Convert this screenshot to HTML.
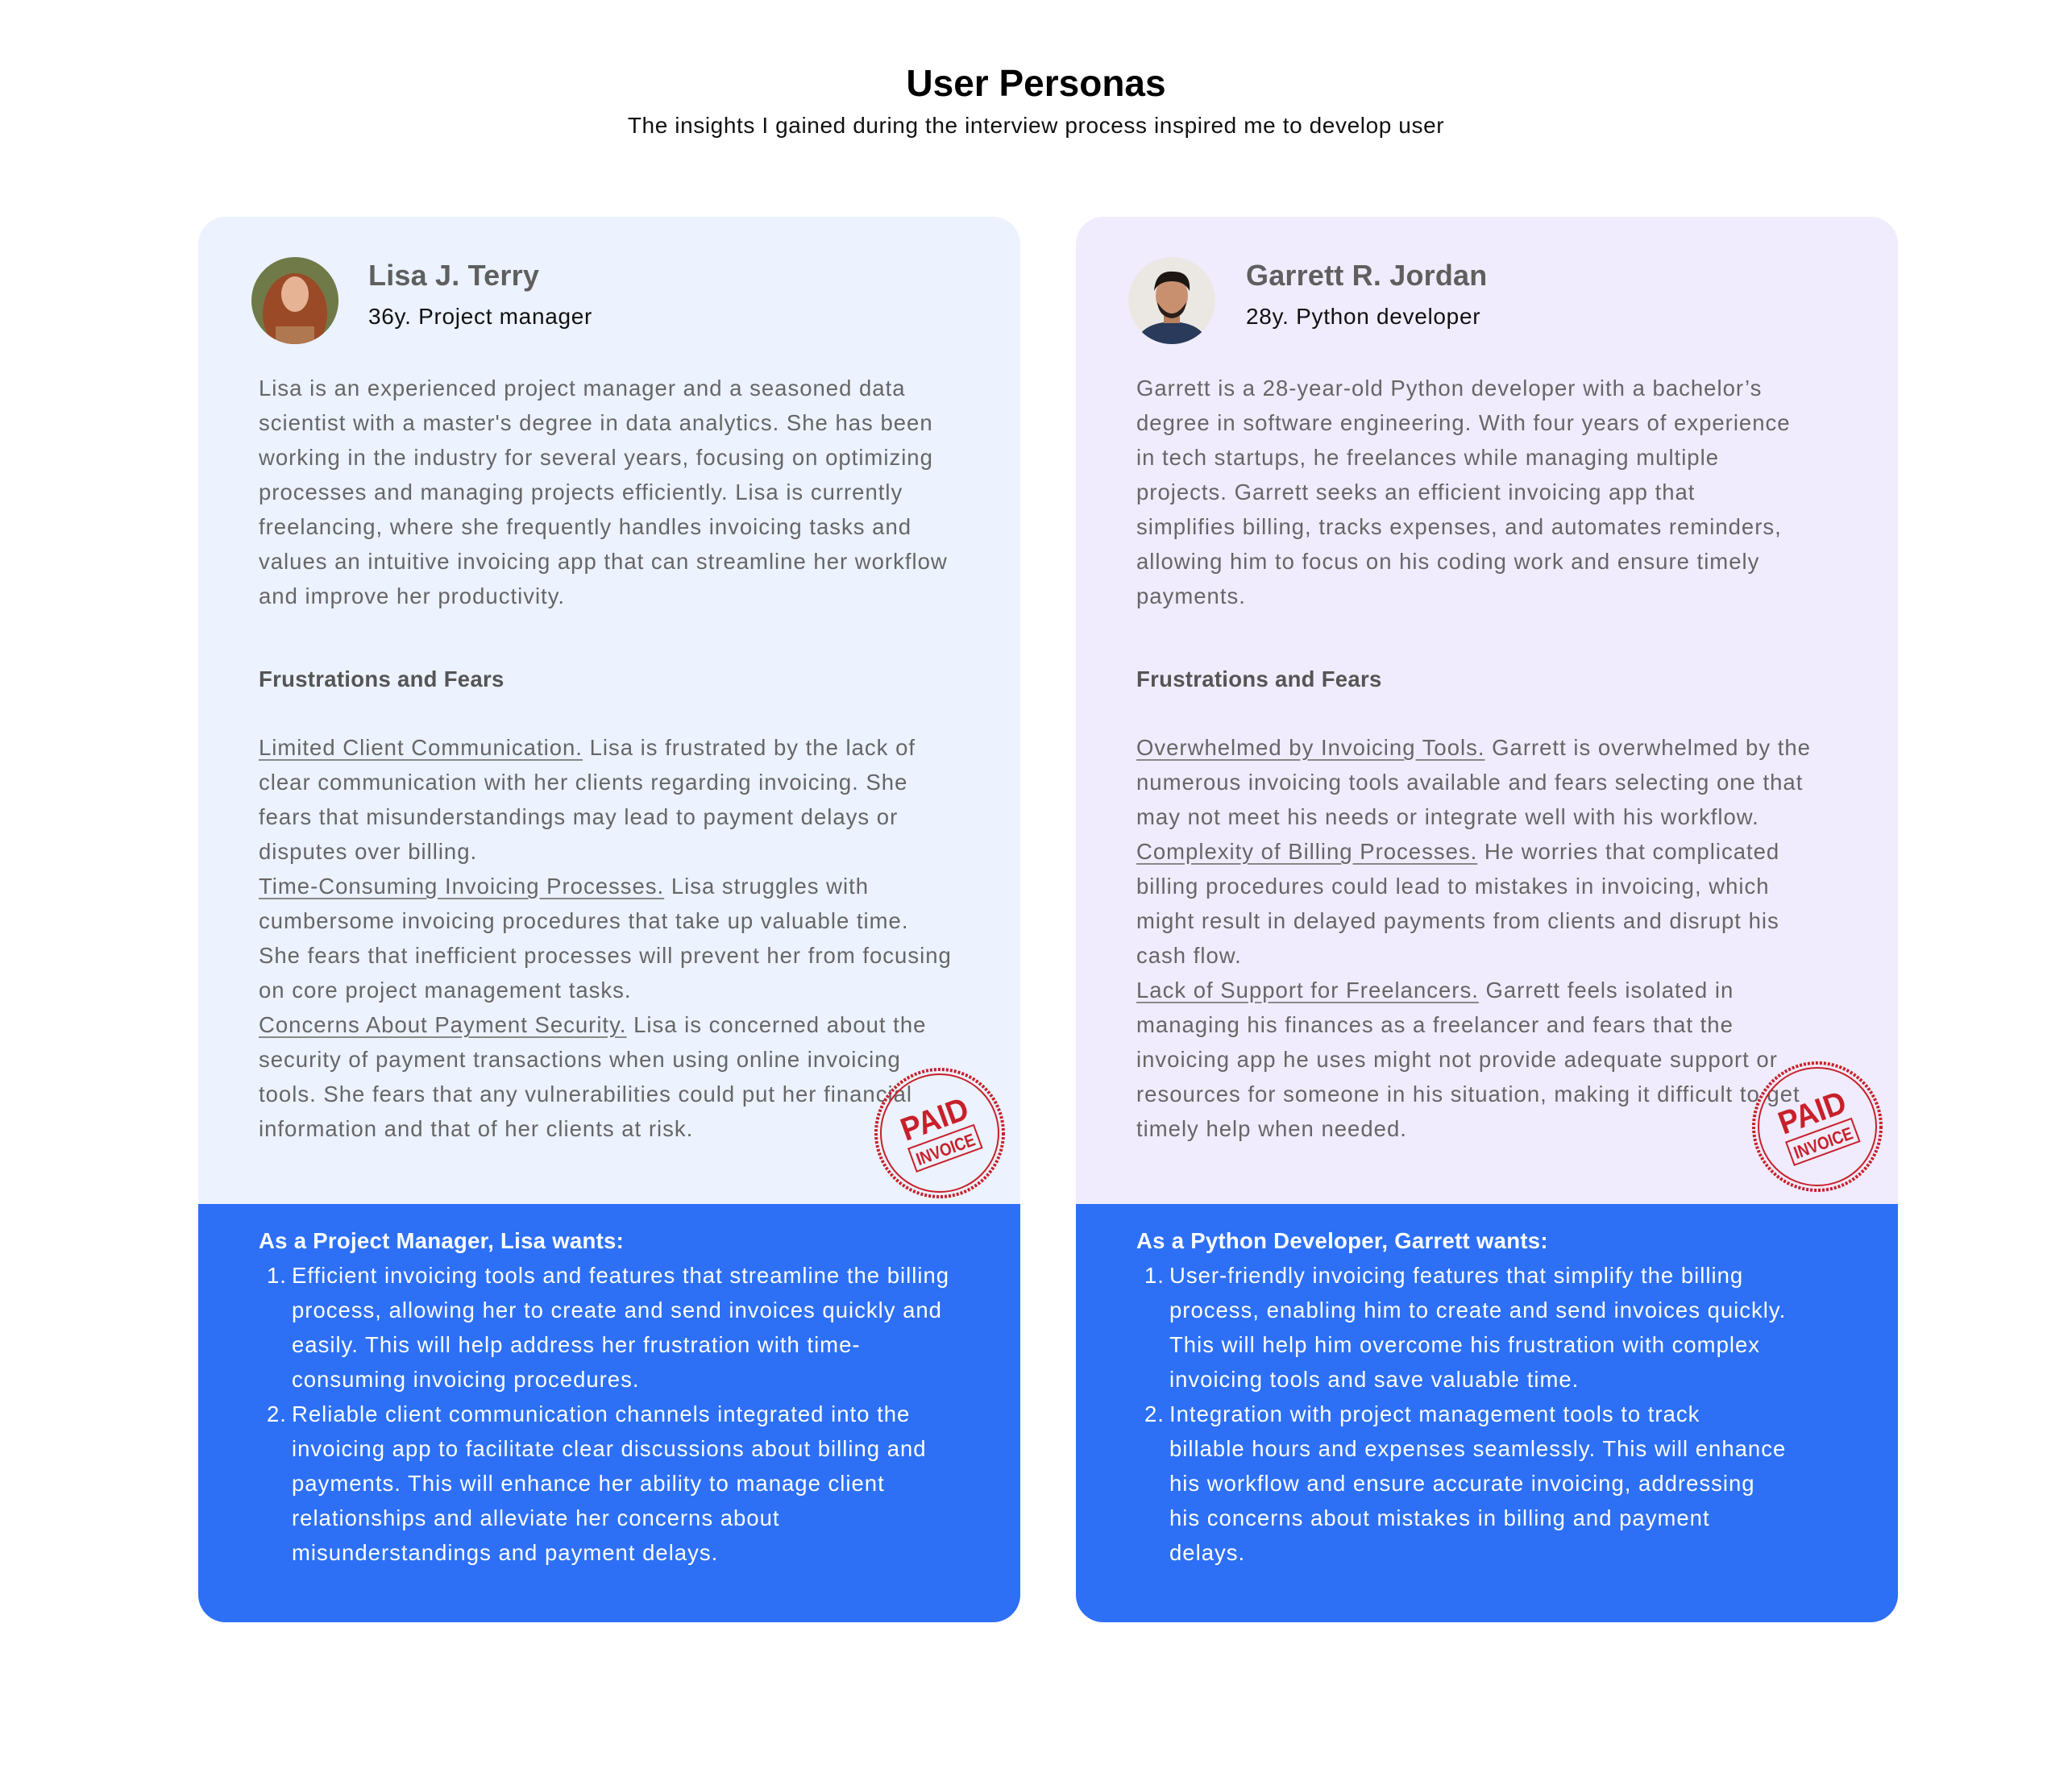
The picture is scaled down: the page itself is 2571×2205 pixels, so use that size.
<!DOCTYPE html>
<html><head><meta charset="utf-8"><style>
*{margin:0;padding:0;box-sizing:border-box}
body{width:2571px;height:2205px;background:#fff;font-family:"Liberation Sans",sans-serif;position:relative;overflow:hidden}
.t{position:absolute;left:0;width:2571px;text-align:center}
.card{position:absolute;top:269px;width:1020px;height:1744px;border-radius:34px;overflow:hidden}
.blue{position:absolute;left:0;top:1225px;width:100%;height:519px;background:#2D70F6}
.av{position:absolute;width:108px;height:108px;border-radius:50%;overflow:hidden;top:50px}
.nm{position:absolute;font-size:36px;color:#5f5f5f;top:52px;font-weight:bold;letter-spacing:0.2px}
.sb{position:absolute;font-size:28px;color:#111;top:108px;letter-spacing:0.7px}
.p{position:absolute;font-size:27.5px;line-height:43px;color:#666;white-space:nowrap;letter-spacing:1px}
.h{position:absolute;font-size:27.5px;line-height:43px;color:#555;font-weight:bold;letter-spacing:0.3px}
u{text-decoration:underline;text-decoration-color:#888;text-underline-offset:5px}
.w{position:absolute;font-size:27.5px;line-height:43px;color:#fff;white-space:nowrap;letter-spacing:1px}
.w b{font-weight:bold;letter-spacing:0.3px}
.li{padding-left:41px;position:relative}
.li span{position:absolute;left:10px}
.stamp{position:absolute;width:166px;height:166px}
</style></head><body>
<div class="t" style="top:76px;font-size:46px;font-weight:bold;color:#000">User Personas</div>
<div class="t" style="top:140px;font-size:28px;color:#111;letter-spacing:0.6px">The insights I gained during the interview process inspired me to develop user</div>

<div class="card" style="left:246px;background:#ECF2FE">
 <svg class="av" style="left:66px" viewBox="0 0 108 108"><rect width="108" height="108" fill="#6f7a48"/><ellipse cx="54" cy="70" rx="40" ry="50" fill="#9a4a26"/><ellipse cx="54" cy="46" rx="17" ry="22" fill="#e6b394"/><rect x="30" y="86" width="48" height="30" fill="#b07850"/></svg>
 <div class="nm" style="left:211px">Lisa J. Terry</div>
 <div class="sb" style="left:211px">36y. Project manager</div>
 <div class="p" style="left:75px;top:191px">Lisa is an experienced project manager and a seasoned data<br>scientist with a master's degree in data analytics. She has been<br>working in the industry for several years, focusing on optimizing<br>processes and managing projects efficiently. Lisa is currently<br>freelancing, where she frequently handles invoicing tasks and<br>values an intuitive invoicing app that can streamline her workflow<br>and improve her productivity.</div>
 <div class="h" style="left:75px;top:552px">Frustrations and Fears</div>
 <div class="p" style="left:75px;top:637px"><u>Limited Client Communication.</u> Lisa is frustrated by the lack of<br>clear communication with her clients regarding invoicing. She<br>fears that misunderstandings may lead to payment delays or<br>disputes over billing.<br><u>Time-Consuming Invoicing Processes.</u> Lisa struggles with<br>cumbersome invoicing procedures that take up valuable time.<br>She fears that inefficient processes will prevent her from focusing<br>on core project management tasks.<br><u>Concerns About Payment Security.</u> Lisa is concerned about the<br>security of payment transactions when using online invoicing<br>tools. She fears that any vulnerabilities could put her financial<br>information and that of her clients at risk.</div>
 <div class="blue"></div>
 <div class="w" style="left:75px;top:1249px"><b>As a Project Manager, Lisa wants:</b>
  <div class="li"><span>1.</span>Efficient invoicing tools and features that streamline the billing<br>process, allowing her to create and send invoices quickly and<br>easily. This will help address her frustration with time-<br>consuming invoicing procedures.</div>
  <div class="li"><span>2.</span>Reliable client communication channels integrated into the<br>invoicing app to facilitate clear discussions about billing and<br>payments. This will enhance her ability to manage client<br>relationships and alleviate her concerns about<br>misunderstandings and payment delays.</div></div>
 <svg class="stamp" style="left:837px;top:1054px" viewBox="0 0 166 166"><circle cx="83" cy="83" r="79" fill="none" stroke="#c8202a" stroke-width="4" stroke-dasharray="3 2"/><circle cx="83" cy="83" r="73" fill="none" stroke="#c8202a" stroke-width="2"/><g transform="rotate(-20 83 83)" fill="#c8202a" font-family="Liberation Sans" font-weight="bold"><text x="83" y="78" font-size="40" text-anchor="middle" textLength="86" lengthAdjust="spacingAndGlyphs">PAID</text><rect x="40" y="88" width="86" height="30" fill="none" stroke="#c8202a" stroke-width="2"/><text x="83" y="112" font-size="22" text-anchor="middle" textLength="76" lengthAdjust="spacingAndGlyphs">INVOICE</text></g></svg>
</div>

<div class="card" style="left:1335px;background:#F0ECFD">
 <svg class="av" style="left:65px" viewBox="0 0 108 108"><rect width="108" height="108" fill="#ebe8e4"/><path d="M10 108 Q14 82 54 80 Q94 82 98 108Z" fill="#2a3a5a"/><rect x="44" y="62" width="20" height="20" fill="#b8805e"/><ellipse cx="54" cy="48" rx="20" ry="25" fill="#c99070"/><path d="M32 42 Q34 16 56 18 Q78 18 76 42 Q70 30 54 30 Q38 30 32 42Z" fill="#1e1612"/><path d="M36 56 Q54 84 72 56 Q70 74 54 76 Q38 74 36 56Z" fill="#2a1e1a"/></svg>
 <div class="nm" style="left:211px">Garrett R. Jordan</div>
 <div class="sb" style="left:211px">28y. Python developer</div>
 <div class="p" style="left:75px;top:191px">Garrett is a 28-year-old Python developer with a bachelor’s<br>degree in software engineering. With four years of experience<br>in tech startups, he freelances while managing multiple<br>projects. Garrett seeks an efficient invoicing app that<br>simplifies billing, tracks expenses, and automates reminders,<br>allowing him to focus on his coding work and ensure timely<br>payments.</div>
 <div class="h" style="left:75px;top:552px">Frustrations and Fears</div>
 <div class="p" style="left:75px;top:637px"><u>Overwhelmed by Invoicing Tools.</u> Garrett is overwhelmed by the<br>numerous invoicing tools available and fears selecting one that<br>may not meet his needs or integrate well with his workflow.<br><u>Complexity of Billing Processes.</u> He worries that complicated<br>billing procedures could lead to mistakes in invoicing, which<br>might result in delayed payments from clients and disrupt his<br>cash flow.<br><u>Lack of Support for Freelancers.</u> Garrett feels isolated in<br>managing his finances as a freelancer and fears that the<br>invoicing app he uses might not provide adequate support or<br>resources for someone in his situation, making it difficult to get<br>timely help when needed.</div>
 <div class="blue"></div>
 <div class="w" style="left:75px;top:1249px"><b>As a Python Developer, Garrett wants:</b>
  <div class="li"><span>1.</span>User-friendly invoicing features that simplify the billing<br>process, enabling him to create and send invoices quickly.<br>This will help him overcome his frustration with complex<br>invoicing tools and save valuable time.</div>
  <div class="li"><span>2.</span>Integration with project management tools to track<br>billable hours and expenses seamlessly. This will enhance<br>his workflow and ensure accurate invoicing, addressing<br>his concerns about mistakes in billing and payment<br>delays.</div></div>
 <svg class="stamp" style="left:837px;top:1046px" viewBox="0 0 166 166"><circle cx="83" cy="83" r="79" fill="none" stroke="#c8202a" stroke-width="4" stroke-dasharray="3 2"/><circle cx="83" cy="83" r="73" fill="none" stroke="#c8202a" stroke-width="2"/><g transform="rotate(-20 83 83)" fill="#c8202a" font-family="Liberation Sans" font-weight="bold"><text x="83" y="78" font-size="40" text-anchor="middle" textLength="86" lengthAdjust="spacingAndGlyphs">PAID</text><rect x="40" y="88" width="86" height="30" fill="none" stroke="#c8202a" stroke-width="2"/><text x="83" y="112" font-size="22" text-anchor="middle" textLength="76" lengthAdjust="spacingAndGlyphs">INVOICE</text></g></svg>
</div>
</body></html>
